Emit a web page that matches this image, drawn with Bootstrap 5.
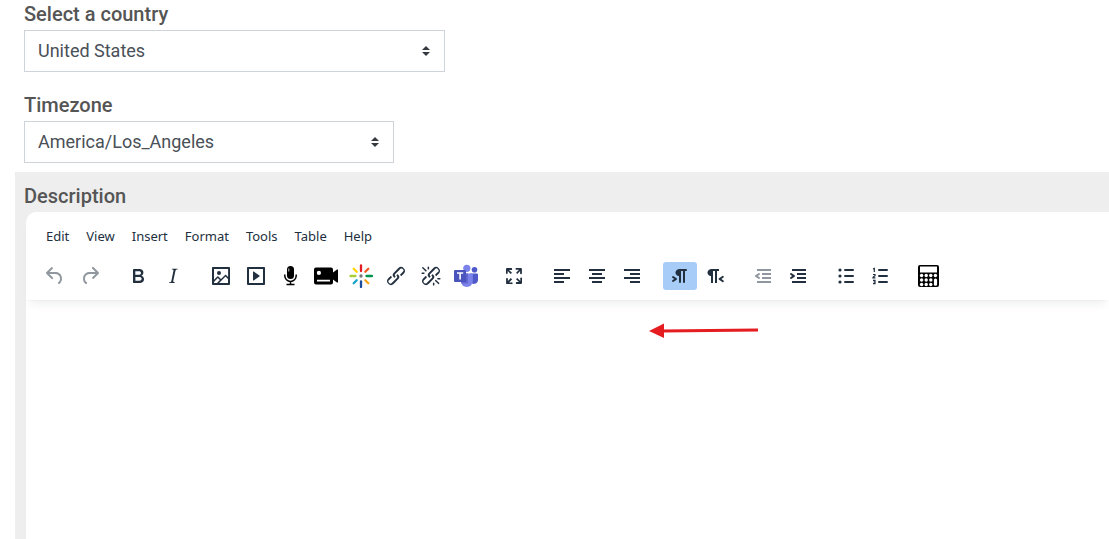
<!DOCTYPE html>
<html lang="en">
<head>
<meta charset="utf-8">
<meta name="viewport" content="width=device-width, initial-scale=1">
<title>Event details</title>
<link href="https://cdn.jsdelivr.net/npm/bootstrap@5.3.0/dist/css/bootstrap.min.css" rel="stylesheet">
<style>
  body { font-family: Roboto, "Liberation Sans", sans-serif; color: #495057; overflow-x: hidden; }
  .page { min-height: 100vh; padding: 2px 0 0 15px; }
  .field { padding-left: 9px; }
  .field-label { font-size: 20px; line-height: 24px; font-weight: 500; color: #555; margin-bottom: 4px; display: block; }
  .field .form-select {
    max-width: 100%; height: 42px; padding: 0 36px 0 13px; border: 1px solid #ced4da; border-radius: 0;
    font-size: 18px; line-height: 24px; color: #495057;
    background-image: url("data:image/svg+xml,%3csvg xmlns='http://www.w3.org/2000/svg' viewBox='0 0 4 5'%3e%3cpath fill='%23343a40' d='M2 0L0 2h4zm0 5L0 3h4z'/%3e%3c/svg%3e");
    background-size: 8px 10px; background-position: right 14px center;
  }
  .field-country { margin-bottom: 21px; }
  .field-zone { margin-bottom: 9px; }
  .select-country { width: 421px; }
  .select-zone { width: 370px; }
  .description { background: #eee; padding-top: 12px; }
  .editor { background: #fff; border-top-left-radius: 10px; margin-left: 11px; }
  .editor-head { padding: 12px 0 10px 12px; box-shadow: 0 2px 2px -2px rgba(34,47,62,.1), 0 8px 8px -4px rgba(34,47,62,.07); border-top-left-radius: 10px; }
  .menu-row { padding-left: 4px; gap: 9px; margin-bottom: 14px; }
  .menu-row button { font: 13px/24px "Noto Sans", "Open Sans", sans-serif; color: #222f3e; background: none; border: 0; padding: 0 4px; }
  .tool-row { gap: 0 14px; }
  .tool-group { gap: 1px; }
  .tool { width: 34px; height: 28px; padding: 0; border: 0; border-radius: 3px; background: none; color: #222f3e; display: flex; align-items: center; justify-content: center; }
  .tool svg { width: 24px; height: 24px; fill: currentColor; }
  .tool:disabled { color: #90979e; }
  .tool.pressed { background: #a6ccf7; }
  .tool.plugin { color: #000; }
  .editor-body textarea { display: block; width: 100%; border: 0; outline: 0; resize: none; background: transparent; padding: 16px; }
  .pointer { left: 622px; top: 21px; width: 112px; height: 20px; pointer-events: none; }
</style>
</head>
<body>
<main class="page d-flex flex-column">
  <div class="field field-country">
    <label class="field-label" for="country">Select a country</label>
    <select class="form-select select-country" id="country"><option>United States</option></select>
  </div>
  <div class="field field-zone">
    <label class="field-label" for="zone">Timezone</label>
    <select class="form-select select-zone" id="zone"><option>America/Los_Angeles</option></select>
  </div>
  <section class="description flex-grow-1 d-flex flex-column">
    <div class="field"><label class="field-label" for="desc">Description</label></div>
    <div class="editor flex-grow-1 d-flex flex-column">
      <div class="editor-head">
        <div class="menu-row d-flex flex-wrap" role="menubar">
          <button type="button" role="menuitem">Edit</button>
          <button type="button" role="menuitem">View</button>
          <button type="button" role="menuitem">Insert</button>
          <button type="button" role="menuitem">Format</button>
          <button type="button" role="menuitem">Tools</button>
          <button type="button" role="menuitem">Table</button>
          <button type="button" role="menuitem">Help</button>
        </div>
        <div class="tool-row d-flex flex-wrap" role="toolbar">
          <div class="tool-group d-flex">
            <button type="button" class="tool" aria-label="Undo" disabled><svg viewBox="0 0 24 24"><path d="M6.4 8H12c3.7 0 6.2 2 6.8 5.1.6 2.7-.4 5.6-2.3 6.8a1 1 0 01-1-1.8c1.1-.6 1.8-2.7 1.4-4.6-.5-2.1-2.1-3.5-4.9-3.5H6.4l3.3 3.3a1 1 0 11-1.4 1.4l-5-5a1 1 0 010-1.4l5-5a1 1 0 011.4 1.4L6.4 8z"/></svg></button>
            <button type="button" class="tool" aria-label="Redo" disabled><svg viewBox="0 0 24 24"><path d="M17.6 10H12c-2.8 0-4.4 1.4-4.9 3.5-.4 2 .3 4 1.4 4.6a1 1 0 11-1 1.8c-2-1.2-2.9-4.1-2.3-6.8.6-3 3-5.1 6.8-5.1h5.6l-3.3-3.3a1 1 0 111.4-1.4l5 5a1 1 0 010 1.4l-5 5a1 1 0 01-1.4-1.4l3.3-3.3z"/></svg></button>
          </div>
          <div class="tool-group d-flex">
            <button type="button" class="tool" aria-label="Bold"><svg viewBox="0 0 24 24"><path d="M7.8 19c-.3 0-.5 0-.6-.2l-.2-.5V5.7c0-.2 0-.4.2-.5l.6-.2h5c1.5 0 2.7.3 3.5 1 .7.6 1.1 1.4 1.1 2.5a3 3 0 01-.6 1.9c-.4.6-1 1-1.6 1.2.4.1.9.3 1.3.6s.8.7 1 1.2c.4.4.5 1 .5 1.6 0 1.3-.4 2.3-1.3 3-.8.7-2.1 1-3.8 1H7.8zm5-8.3c.6 0 1.2-.1 1.6-.5.4-.3.6-.7.6-1.3 0-1.1-.8-1.7-2.3-1.7H9.3v3.5h3.4zm.5 6c.7 0 1.3-.1 1.7-.4.4-.4.6-.9.6-1.5s-.2-1-.7-1.4c-.4-.3-1-.4-2-.4H9.4v3.8h4z" fill-rule="evenodd"/></svg></button>
            <button type="button" class="tool" aria-label="Italic"><svg viewBox="0 0 24 24"><path d="M16.7 4.7l-.1.9h-.3c-.6 0-1 0-1.4.3-.3.3-.4.6-.5 1.1l-2.1 9.8v.6c0 .5.4.8 1.4.8h.2l-.2.8H8l.2-.8h.2c1.1 0 1.8-.5 2-1.5l2-9.8.1-.5c0-.6-.4-.8-1.4-.8h-.3l.2-.9h5.8z"/></svg></button>
          </div>
          <div class="tool-group d-flex">
            <button type="button" class="tool" aria-label="Image"><svg viewBox="0 0 24 24"><path d="M5 15.7l3.3-3.2c.3-.3.7-.3 1 0L12 15l4.1-4c.3-.4.8-.4 1 0l2 1.9V5H5v10.7zM5 18V19h3l2.8-2.9-2-2L5 17.9zm14-3l-2.5-2.4-6.4 6.5H19v-4zM4 3h16c.6 0 1 .4 1 1v16c0 .6-.4 1-1 1H4a1 1 0 01-1-1V4c0-.6.4-1 1-1zm6 8a2 2 0 100-4 2 2 0 000 4z" fill-rule="nonzero"/></svg></button>
            <button type="button" class="tool" aria-label="Media"><svg viewBox="0 0 24 24"><path d="M4 3h16c.6 0 1 .4 1 1v16c0 .6-.4 1-1 1H4a1 1 0 01-1-1V4c0-.6.4-1 1-1zm1 2v14h14V5H5zm4.8 2.6l5.6 4a.5.5 0 010 .8l-5.6 4A.5.5 0 019 16V8a.5.5 0 01.8-.4z" fill-rule="evenodd"/></svg></button>
            <button type="button" class="tool plugin" aria-label="Record audio"><svg viewBox="0 0 24 24"><rect x="8" y="2" width="7" height="13" rx="3.5"/><path d="M9.8 4.500v3" stroke="#fff" stroke-width="1" opacity=".8"/><path d="M5.800 10.500v1.200a5.700 5.700 0 0011.400 0v-1.200M11.500 17.500V20M7.500 20.500h8" fill="none" stroke="currentColor" stroke-width="1.500"/></svg></button>
            <button type="button" class="tool plugin" aria-label="Record video"><svg viewBox="0 0 24 24"><path fill-rule="evenodd" d="M2 3.500h15a2 2 0 012 2v3l4-3h1v13h-1l-4-3v3a2 2 0 01-2 2H2a2 2 0 01-2-2v-13a2 2 0 012-2zM3 15.700v1.700h13v-1.700zM4.900 6.800a2.100 2.100 0 100 4.200 2.100 2.100 0 000-4.200z"/></svg></button>
            <button type="button" class="tool" aria-label="Embed Kaltura media"><svg viewBox="0 0 24 24"><g fill="none" stroke-width="2.300" stroke-linecap="round"><path stroke="#e21c24" d="M12 1.500V7"/><path stroke="#f15a22" d="M16.300 7.700l3-3"/><path stroke="#00954d" d="M17.500 12H23"/><path stroke="#f9a51a" d="M16.300 16.300l3 3"/><path stroke="#1c4c9c" d="M12 17.500V23"/><path stroke="#15a5c9" d="M7.700 16.300l-3 3"/><path stroke="#a9cf38" d="M1.500 12H6.500"/><path stroke="#ffd400" d="M7.700 7.700l-3-3"/></g><circle cx="12" cy="12" r="1.700" fill="#777"/></svg></button>
            <button type="button" class="tool" aria-label="Link"><svg viewBox="0 0 24 24"><path d="M6.2 12.3a1 1 0 011.4 1.4l-2.1 2a2 2 0 102.7 2.8l4.8-4.8a1 1 0 000-1.4 1 1 0 111.400-1.300 2.900 2.900 0 010 4L9.600 20a3.900 3.900 0 01-5.500-5.500l2-2zm11.600-.6a1 1 0 01-1.400-1.400l2-2a2 2 0 10-2.600-2.800L11 10.300a1 1 0 000 1.400A1 1 0 119.600 13a2.900 2.900 0 010-4L14.400 4a3.900 3.900 0 015.500 5.500l-2 2z"/></svg></button>
            <button type="button" class="tool" aria-label="Remove link"><svg viewBox="0 0 24 24"><path d="M6.2 12.3a1 1 0 011.4 1.4l-2 2a2 2 0 102.600 2.800l4.800-4.800a1 1 0 000-1.400 1 1 0 111.400-1.300 2.900 2.900 0 010 4L9.600 20a3.900 3.900 0 01-5.500-5.500l2-2zm11.600-.6a1 1 0 01-1.400-1.400l2.100-2a2 2 0 10-2.700-2.800L11 10.300a1 1 0 000 1.400A1 1 0 119.600 13a2.900 2.900 0 010-4L14.400 4a3.900 3.900 0 015.500 5.500l-2 2zM7.600 6.300a.8.8 0 01-1 1.100L3.300 4.200a.7.7 0 111-1l3.200 3.100zM5.100 8.600a.8.8 0 010 1.500H3a.8.8 0 010-1.500H5zm5-3.500a.8.8 0 01-1.500 0V3a.8.8 0 011.500 0V5zm6 11.800a.8.8 0 011-1l3.200 3.200a.8.8 0 01-1 1L16 17zm-2.200 2a.8.8 0 011.500 0V21a.8.8 0 01-1.500 0V19zm5-3.500a.7.7 0 110-1.500H21a.8.8 0 010 1.500H19z"/></svg></button>
            <button type="button" class="tool" aria-label="Microsoft Teams"><svg viewBox="0 0 24 24"><circle cx="20.500" cy="5.700" r="2.800" fill="#5059c9"/><path fill="#5059c9" d="M16 9.500h7a1 1 0 011 1V16a4.200 4.200 0 01-8 1.500z"/><circle cx="12.800" cy="4.300" r="3.600" fill="#7b83eb"/><path fill="#7b83eb" d="M7.500 9.500h10.300a1 1 0 011 1V17a6 6 0 01-12 0z"/><path fill="#6068d0" d="M7 9.500h7v9a1 1 0 01-1 1H7.300z"/><rect x="0" y="6" width="12" height="12" rx="1" fill="#4b53bc"/><path d="M3 9h6.200M6.100 9v6.500" stroke="#fff" stroke-width="1.600"/></svg></button>
          </div>
          <div class="tool-group d-flex">
            <button type="button" class="tool" aria-label="Fullscreen"><svg viewBox="0 0 24 24"><path d="M15.300 10l-1.200-1.300 2.900-3h-2.300a.9.9 0 110-1.700H19c.5 0 .9.4.9.9v4.400a.9.9 0 11-1.800 0V7l-2.900 3zm0 4l3 3v-2.300a.9.9 0 111.700 0V19c0 .5-.4.9-.9.9h-4.400a.9.9 0 110-1.800H17l-3-2.900 1.300-1.200zM10 15.400l-2.900 3h2.300a.9.9 0 110 1.700H5a.9.9 0 01-.9-.9v-4.400a.9.9 0 111.800 0V17l2.900-3 1.200 1.300zM8.700 10L5.700 7v2.300a.9.9 0 01-1.700 0V5c0-.5.4-.9.9-.9h4.400a.9.9 0 010 1.800H7l3 2.900-1.300 1.200z"/></svg></button>
          </div>
          <div class="tool-group d-flex">
            <button type="button" class="tool" aria-label="Align left"><svg viewBox="0 0 24 24"><path d="M4 5h16v2H4zM4 9h10v2H4zM4 13h16v2H4zM4 17h10v2H4z"/></svg></button>
            <button type="button" class="tool" aria-label="Align center"><svg viewBox="0 0 24 24"><path d="M4 5h16v2H4zM7 9h10v2H7zM4 13h16v2H4zM7 17h10v2H7z"/></svg></button>
            <button type="button" class="tool" aria-label="Align right"><svg viewBox="0 0 24 24"><path d="M4 5h16v2H4zM10 9h10v2H10zM4 13h16v2H4zM10 17h10v2H10z"/></svg></button>
          </div>
          <div class="tool-group d-flex">
            <button type="button" class="tool pressed" aria-label="Left to right" aria-pressed="true"><svg viewBox="0 0 24 24"><path d="M11 5h7a1 1 0 010 2h-1v11a1 1 0 01-2 0V7h-2v11a1 1 0 01-2 0v-6c-.5 0-1 0-1.400-.3A3.400 3.400 0 017.800 10a3.300 3.300 0 010-2.800 3.400 3.400 0 011.800-1.800L11 5zM4.400 16.200L6.200 15l-1.800-1.200a1 1 0 011.200-1.600l3 2a1 1 0 010 1.600l-3 2a1 1 0 11-1.200-1.600z"/></svg></button>
            <button type="button" class="tool" aria-label="Right to left"><svg viewBox="0 0 24 24"><path d="M8 5h8v2h-2v12h-2V7h-2v12H8v-7c-.5 0-1 0-1.400-.3A3.400 3.400 0 014.800 10a3.300 3.300 0 010-2.800 3.400 3.400 0 011.800-1.800L8 5zm12 11.200a1 1 0 11-1 1.600l-3-2a1 1 0 010-1.600l3-2a1 1 0 111 1.600L18.400 15l1.800 1.200z"/></svg></button>
          </div>
          <div class="tool-group d-flex">
            <button type="button" class="tool" aria-label="Decrease indent" disabled><svg viewBox="0 0 24 24"><path d="M6 5h14v2H6zM11 9h9v2h-9zM11 13h9v2h-9zM6 17h14v2H6zM8.600 13.200a1 1 0 01-1.200 1.600l-3-2a1 1 0 010-1.600l3-2a1 1 0 011.200 1.600L6.800 12l1.800 1.200z"/></svg></button>
            <button type="button" class="tool" aria-label="Increase indent"><svg viewBox="0 0 24 24"><path d="M6 5h14v2H6zM11 9h9v2h-9zM11 13h9v2h-9zM6 17h14v2H6zM4.400 13.200L6.200 12l-1.800-1.200a1 1 0 011.200-1.600l3 2a1 1 0 010 1.600l-3 2a1 1 0 11-1.200-1.600z"/></svg></button>
          </div>
          <div class="tool-group d-flex">
            <button type="button" class="tool" aria-label="Bullet list"><svg viewBox="0 0 24 24"><path d="M11 5h8a1 1 0 010 2h-8a1 1 0 010-2zM11 11h8a1 1 0 010 2h-8a1 1 0 010-2zM11 17h8a1 1 0 010 2h-8a1 1 0 010-2z"/><circle cx="6" cy="6" r="1.600"/><circle cx="6" cy="12" r="1.600"/><circle cx="6" cy="18" r="1.600"/></svg></button>
            <button type="button" class="tool" aria-label="Numbered list"><svg viewBox="0 0 24 24"><path d="M10 5h8a1 1 0 010 2h-8a1 1 0 010-2zM10 11h8a1 1 0 010 2h-8a1 1 0 010-2zM10 17h8a1 1 0 010 2h-8a1 1 0 010-2z"/><path fill="none" stroke="currentColor" stroke-width="1.200" d="M4 5l1.300-.6V8M4 10.500h2v1.300l-2 1.500v.5h2.400M4 16.400h2v3.200H4M4.500 18H6"/></svg></button>
          </div>
          <div class="tool-group d-flex">
            <button type="button" class="tool plugin" aria-label="Equation editor"><svg viewBox="0 0 24 24"><rect x="1" y="1" width="21" height="22" rx="2"/><g fill="#fff"><path d="M3 2.500h17v6H3z"/><circle cx="4.600" cy="11.500" r="1.700"/><circle cx="9.200" cy="11.500" r="1.700"/><circle cx="13.800" cy="11.500" r="1.700"/><circle cx="18.400" cy="11.500" r="1.700"/><circle cx="4.600" cy="16" r="1.700"/><circle cx="9.200" cy="16" r="1.700"/><circle cx="13.800" cy="16" r="1.700"/><circle cx="4.600" cy="20.500" r="1.700"/><circle cx="9.200" cy="20.500" r="1.700"/><circle cx="13.800" cy="20.500" r="1.700"/><rect x="16.900" y="14.500" width="3.200" height="7.200" rx="1.500"/></g></svg></button>
          </div>
        </div>
      </div>
      <div class="editor-body position-relative flex-grow-1">
        <textarea id="desc" rows="4"></textarea>
        <svg class="pointer position-absolute" viewBox="0 0 112 20" aria-hidden="true"><path d="M14 10L110 9" stroke="#e51c20" stroke-width="3"/><path d="M1 10L16 2.500v14.500z" fill="#e51c20"/></svg>
      </div>
    </div>
  </section>
</main>
<script src="https://cdn.jsdelivr.net/npm/bootstrap@5.3.0/dist/js/bootstrap.bundle.min.js"></script>
</body>
</html>
